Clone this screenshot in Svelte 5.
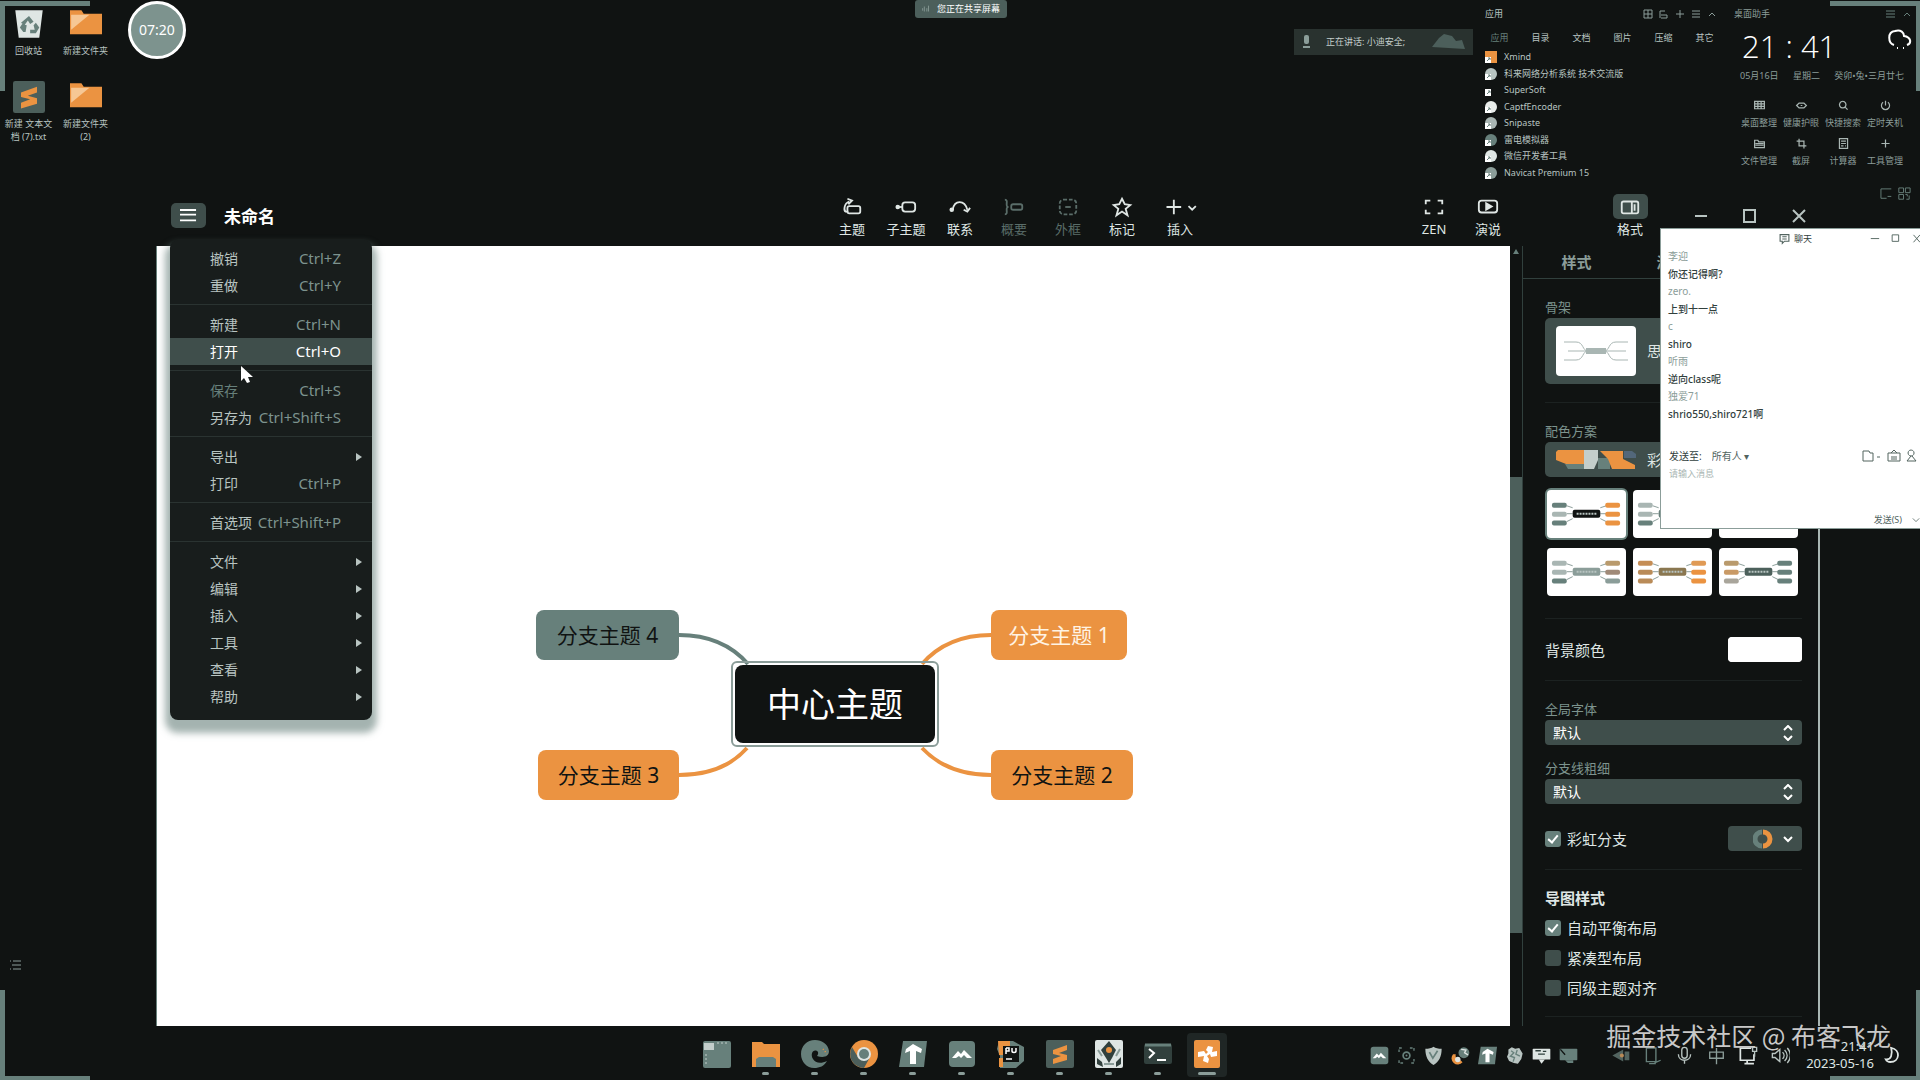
<script>
  const desktopIcons = [
    { icon: "bin", label: "回收站" },
    { icon: "folder", label: "新建文件夹" },
    { icon: "sublime", label: "新建 文本文档 (7).txt" },
    { icon: "folder", label: "新建文件夹 (2)" },
  ]

  const tools = [
    { icon: "topic", label: "主题" },
    { icon: "subtopic", label: "子主题" },
    { icon: "relation", label: "联系" },
    { icon: "summary", label: "概要", disabled: true },
    { icon: "boundary", label: "外框", disabled: true },
    { icon: "star", label: "标记" },
    { icon: "insert", label: "插入", wide: true },
  ]

  const menuGroups = [
    [
      { label: "撤销", keys: "Ctrl+Z" },
      { label: "重做", keys: "Ctrl+Y" },
    ],
    [
      { label: "新建", keys: "Ctrl+N" },
      { label: "打开", keys: "Ctrl+O", active: true },
    ],
    [
      { label: "保存", keys: "Ctrl+S", disabled: true },
      { label: "另存为", keys: "Ctrl+Shift+S" },
    ],
    [{ label: "导出" }, { label: "打印", keys: "Ctrl+P" }],
    [{ label: "首选项", keys: "Ctrl+Shift+P" }],
    [
      { label: "文件" },
      { label: "编辑" },
      { label: "插入" },
      { label: "工具" },
      { label: "查看" },
      { label: "帮助" },
    ],
  ]

  const nodes = [
    { label: "分支主题 4", x: 379, y: 364, w: 143, kind: "teal" },
    { label: "分支主题 3", x: 381, y: 504, w: 141, kind: "orange" },
    { label: "分支主题 1", x: 834, y: 364, w: 136, kind: "orange light" },
    { label: "分支主题 2", x: 834, y: 504, w: 142, kind: "orange" },
  ]

  const T = "#67807b"
  const O = "#eb9341"
  const themes = [
    { left: [T, "#a9b6b3", T], mid: "#101312", right: [O, O, O] },
    { left: ["#a9b6b3", "#a9b6b3", T], mid: T, right: [T, T, T] },
    { left: [T, T, T], mid: T, right: [T, T, T] },
    { left: ["#a9b6b3", "#a9b6b3", T], mid: "#8b9d99", right: ["#b99a6c", "#a08a78", "#8b9d99"] },
    { left: ["#c58d55", "#b98b58", "#b98b58"], mid: "#8a7750", right: ["#e09a55", O, O] },
    { left: ["#b99a6c", "#c99a66", "#a9a59b"], mid: "#4c605b", right: [T, T, T] },
  ]

  const apps = [
    { label: "Xmind", color: O },
    { label: "科来网络分析系统 技术交流版", color: "#b8c4c1" },
    { label: "SuperSoft", color: "#ffffff", small: true },
    { label: "CaptfEncoder", color: "#e8ecea" },
    { label: "Snipaste", color: "#a9b6b3" },
    { label: "雷电模拟器", color: "#67807b" },
    { label: "微信开发者工具", color: "#dfe6e4" },
    { label: "Navicat Premium 15", color: "#8b9d99" },
  ]
  const appTabs = ["应用", "目录", "文档", "图片", "压缩", "其它"]

  const helpers = [
    { label: "桌面整理", d: "M2 3h12v9H2zM2 6h12M2 9h12M6 3v9M10 3v9" },
    { label: "健康护眼", d: "M2 8l3-3h6l3 3-3 3H5zM7 8h2" },
    { label: "快捷搜索", d: "M7 3a4 4 0 1 0 .1 0M10 10l3 3" },
    { label: "定时关机", d: "M5 4a5 5 0 1 0 6 0M8 2v6" },
    { label: "文件管理", d: "M2 4h4l1 2h7v7H2zM3 8h10M3 10h10" },
    { label: "截屏", d: "M5 2v9h9M2 5h9v9" },
    { label: "计算器", d: "M3 2h10v12H3zM5 5h6M5 8h6M5 11h3M10 11h1" },
    { label: "工具管理", d: "M8 3v10M3 8h10" },
  ]

  const messages = [
    { name: "李迎", text: "你还记得啊?" },
    { name: "zero.", text: "上到十一点" },
    { name: "c", text: "shiro" },
    { name: "听雨", text: "逆向class呢" },
    { name: "独爱71", text: "shrio550,shiro721啊" },
  ]

  const dock = ["start", "files", "edge", "chrome", "typora", "tencent", "pycharm", "sublime", "photo", "terminal", "xmind"]
  const tray = ["tencent", "focus", "shield", "chat", "typora", "leaf", "screen", "monitor"]
  const system = ["speaker", "phone", "mic", "ime", "network", "volume"]

  let rainbow = true
  let balance = true
  let compact = false
  let align = false
</script>

{#snippet glyph(name)}
  <svg class="glyph" viewBox="0 0 28 28" aria-hidden="true">
    {#if name === "bin"}
      <path d="M2 2h24l-3 24H5z" fill="#dfe6e4" />
      <path d="M14 7l4 5-3 2-2-3-3 4-3-2zM8 14l4 1-1 6H9l-3-4zM20 13l3 4-3 5h-5v-3h4l-1-4z" fill={T} />
    {:else if name === "folder"}
      <path d="M0 2h10l2 3h16v18H0z" fill={O} />
      <path d="M1 6h16L1 19z" fill="#f6c794" />
    {:else if name === "sublime"}
      <rect width="28" height="28" rx="2" fill="#4c5f5b" />
      <path d="M7 10l14-5v5l-8 3 8 2v5L7 24v-5l8-3-8-2z" fill={O} />
    {:else if name === "start"}
      <rect y="1" width="28" height="27" rx="2" fill={T} />
      <path d="M1 3h10v7H1z" fill="#c3cecb" />
      <path d="M14 3h12" stroke="#c3cecb" stroke-dasharray="2 2" />
      <path d="M3 14v10" stroke="#c3cecb" stroke-dasharray="2 2" />
    {:else if name === "files"}
      <path d="M0 2h10l2 2h16v23H0z" fill={O} />
      <path d="M4 27v-8l3-2h14l3 2v8z" fill={T} />
    {:else if name === "edge"}
      <path d="M28 11C27 4 21 0 14 0 6 0 0 6 0 14s6 14 13 14c6 0 10-2 13-7-6 3-12 2-14-2-3-5 0-10 4-8 2 1 1 4 0 5 6 2 12 1 12-5z" fill={T} />
      <path d="M22 9l4 5" stroke={O} stroke-width="1.5" stroke-dasharray="1 2" />
    {:else if name === "chrome"}
      <circle cx="14" cy="14" r="14" fill={O} />
      <path d="M2 7a14 14 0 0 0 12 21l5-9H9z" fill="#4c5f5b" />
      <circle cx="14" cy="14" r="7" fill="#dfe6e4" />
      <circle cx="14" cy="14" r="5" fill={T} />
    {:else if name === "typora"}
      <path d="M4 1h24l-3 26H0z" fill={T} />
      <path d="M14 4l9 5-1 4-5-2v13h-6V11l-5 2 1-4z" fill="#fff" />
    {:else if name === "tencent"}
      <rect x="1" y="1" width="26" height="26" rx="4" fill={T} />
      <path d="M4 18l6-7 3 3 3-4 8 8h-5l-3-3-3 3-2-2-3 2z" fill="#fff" />
    {:else if name === "pycharm"}
      <path d="M2 1h14l11 6v14l-8 7H3V16L0 9z" fill={T} />
      <path d="M1 1h12v5H6v9H2zM2 18h4v9H2z" fill={O} />
      <rect x="6" y="6" width="16" height="16" fill="#101312" />
      <path d="M9 8v6M9 8h3v3H9M15 8v3c0 2 4 2 4 0V8M9 19h6" stroke="#fff" stroke-width="1.5" fill="none" />
    {:else if name === "photo"}
      <rect width="28" height="28" rx="2" fill="#dfe6e4" />
      <path d="M14 1l7 9-4 8-3 5-3-5-5-8zM2 18l5 4 1 5-6-3zM26 17l-5 5v5l5-3z" fill="#31403d" />
      <circle cx="14" cy="10" r="3" fill={O} />
      <path d="M3 10l4 6M25 9l-4 7M9 24h10" stroke="#8b9d99" stroke-width="2" />
    {:else if name === "terminal"}
      <rect y="4" width="28" height="20" rx="2" fill="#31403d" />
      <path d="M1 5h26" stroke={T} stroke-width="3" />
      <path d="M5 9l5 4-5 5M13 20h9" stroke="#fff" stroke-width="2" fill="none" />
    {:else if name === "xmind"}
      <rect x="1" width="26" height="28" rx="2" fill={O} />
      <path d="M15 6l5 1-1 5 5-1v5l-6 1-1-3-3 2 2 3-1 4-5-2 1-5-6 1v-5l6-1 2 3 2-2-2-2z" fill="#fff" />
    {:else if name === "focus"}
      <path d="M3 9V3h6M19 3h6v6M25 19v6h-6M9 25H3v-6" stroke={T} stroke-width="2" fill="none" stroke-dasharray="4 2" />
      <circle cx="14" cy="14" r="5" stroke={T} stroke-width="2.5" fill="none" />
      <circle cx="14" cy="14" r="1.5" fill={T} />
    {:else if name === "shield"}
      <path d="M2 4c5 0 9-1 12-3 3 2 7 3 12 3 0 12-4 19-12 24C6 23 2 16 2 4z" fill="#b8c4c1" />
      <path d="M8 9l5 9 7-11" stroke={T} stroke-width="2.5" fill="none" />
    {:else if name === "chat"}
      <path d="M3 12a9 9 0 0 0 14 12l-3-3c-5 0-8-4-7-9z" fill={O} />
      <circle cx="19" cy="10" r="8" fill={T} />
      <path d="M15 5l7 1-2 4 5 3" stroke="#dfe6e4" stroke-width="2" fill="none" />
      <circle cx="10" cy="20" r="4" fill="#dfe6e4" />
    {:else if name === "leaf"}
      <path d="M5 5l5-3 5 2 6-1 5 8-2 8-5 7-6-1-7-3-3-6 2-5z" fill="#b8c4c1" />
      <path d="M9 7l4 3-5 5 6 2-2 6M18 6l-2 6 6 3" stroke={T} stroke-width="2" fill="none" />
    {:else if name === "screen"}
      <rect x="1" y="4" width="26" height="16" rx="1" fill="#dfe6e4" />
      <path d="M10 20h9l-5 6z" fill="#dfe6e4" />
      <path d="M5 7h8M9 12h10M16 8h5" stroke="#31403d" stroke-width="2" />
    {:else if name === "monitor"}
      <rect x="1" y="4" width="26" height="17" rx="1" fill={T} />
      <path d="M9 21h12v4H13z" fill={T} />
      <path d="M2 5l7 8" stroke="#101312" stroke-width="2" />
    {:else if name === "speaker"}
      <path d="M2 14L18 5v18zM20 8h7v13h-7z" fill="#52645f" />
      <circle cx="16" cy="14" r="3" fill="#b98b58" />
    {:else if name === "phone"}
      <path d="M5 3h14v20H5zM17 25l9-4M9 26h10" stroke={T} stroke-width="2" fill="none" />
    {:else if name === "mic"}
      <path d="M14 2a4 4 0 0 1 4 4v8a4 4 0 0 1-8 0V6a4 4 0 0 1 4-4zM5 12c0 12 18 12 18 0M14 21v5" stroke="#b8c4c1" stroke-width="2" fill="none" />
    {:else if name === "ime"}
      <path d="M4 9h20v9H4zM14 3v24" stroke="#8b9d99" stroke-width="2" fill="none" />
    {:else if name === "network"}
      <path d="M18 3H2v18h20v-9M8 26h14M12 21v5" stroke="#dfe6e4" stroke-width="2.5" fill="none" />
      <path d="M20 2h6v6h-6zM23 8v8" stroke="#b8c4c1" stroke-width="2" fill="none" />
    {:else if name === "volume"}
      <path d="M2 11h4l7-6v18l-7-6H2zM17 9c3 3 3 7 0 10M20 6c5 5 5 11 0 16M24 3c6 7 6 15 0 22" stroke="#b8c4c1" stroke-width="2" fill="none" />
    {/if}
  </svg>
{/snippet}

{#snippet line(name)}
  <svg class="line" viewBox="0 0 24 24" aria-hidden="true">
    {#if name === "topic"}
      <rect x="7" y="11" width="14" height="8" rx="2" />
      <path d="M8 17H5c-2-1-2-9 4-11M7 3l5 2-4 4" />
    {:else if name === "subtopic"}
      <rect x="8" y="7" width="14" height="10" rx="3" />
      <path d="M3 12h5" />
      <circle cx="3" cy="12" r="1.5" fill="currentColor" />
    {:else if name === "relation"}
      <path d="M4 15C6 4 17 4 20 15M16 15l4 2 3-4" />
      <circle cx="3" cy="15" r="1.5" fill="currentColor" />
    {:else if name === "summary"}
      <path d="M2 4c3 0 2 3 2 5 0 3 1 3 2 3-1 0-2 0-2 3 0 2 1 5-2 5" />
      <rect x="9" y="9" width="12" height="6" rx="2" />
    {:else if name === "boundary"}
      <rect x="3" y="4" width="18" height="16" rx="4" stroke-dasharray="4 2" />
      <path d="M9 12h6" />
    {:else if name === "star"}
      <path d="M12 3l3 6 6 1-5 4 2 7-6-4-6 4 2-7-5-4 6-1z" />
    {:else if name === "zen"}
      <path d="M3 9V5h5M16 5h5v4M21 15v4h-5M8 19H3v-4" />
    {:else if name === "play"}
      <rect x="2" y="5" width="20" height="13" rx="3" />
      <path d="M10 8l6 3.500-6 3.500z" fill="currentColor" />
    {:else if name === "format"}
      <rect x="3" y="6" width="18" height="13" rx="2" />
      <path d="M14 6v13M17 9v7" />
    {/if}
  </svg>
{/snippet}

<div class="desktop">
  <i class="corner tl"></i>
  <i class="corner tr"></i>
  <i class="corner bl"></i>
  <i class="corner br"></i>

  <div class="desktop-icons">
    {#each desktopIcons as item}
      <button class="shortcut">
        <span class="shortcut-icon">{@render glyph(item.icon)}</span>
        <span>{item.label}</span>
      </button>
    {/each}
  </div>

  <div class="timer">07:20</div>

  <div class="sharing">
    <svg viewBox="0 0 12 12" aria-hidden="true"><path d="M2 5v3M4 3v6M7 5v4M9 2v7" /></svg>
    您正在共享屏幕
  </div>

  <div class="speaking">
    <svg viewBox="0 0 12 16" aria-hidden="true">
      <rect x="4" y="1" width="5" height="9" rx="2" />
      <path d="M3 12h7v2H3z" />
    </svg>
    <span>正在讲话: 小迪安全;</span>
    <svg class="wave" viewBox="0 0 34 20" aria-hidden="true">
      <path d="M1 15l7-9 5-4 8 2 4 5 6-1 3 9z" />
    </svg>
  </div>

  <section class="apps">
    <header>
      <b>应用</b>
      <svg viewBox="0 0 76 12" aria-hidden="true">
        <path d="M2 2h8v8H2zM2 6h8M6 2v8M18 10V3h5M19 7h6v3h-6M38 2v8M34 6h8M50 3h8M50 6h8M50 9h8M67 8l3-3 3 3" />
      </svg>
    </header>
    <nav>
      {#each appTabs as tab, i}
        <button class:dim={i === 0}>{tab}</button>
      {/each}
    </nav>
    <ul>
      {#each apps as app}
        <li>
          <svg viewBox="0 0 12 12" aria-hidden="true">
            {#if app.small}
              <rect x="0" y="5" width="6" height="6" fill={app.color} />
            {:else if app.label === "Xmind"}
              <rect width="12" height="12" fill={app.color} />
            {:else}
              <circle cx="6" cy="6" r="6" fill={app.color} />
            {/if}
            <path d="M0 6h6v6H0z" fill="#fff" />
            <path d="M2 10l3-3M3 7h2v2" stroke="#67807b" fill="none" />
          </svg>
          {app.label}
        </li>
      {/each}
    </ul>
  </section>

  <section class="helper">
    <header>
      <b>桌面助手</b>
      <svg viewBox="0 0 28 12" aria-hidden="true"><path d="M2 3h9M2 6h9M2 9h9M20 8l3-3 3 3" /></svg>
    </header>
    <div class="clock">
      <time>21 : 41</time>
      <svg viewBox="0 0 24 24" aria-hidden="true">
        <path d="M6 17C0 15-1 4 7 3c6-2 9 2 9 5 7 1 8 7 3 9M9 20h1M15 20h1" />
      </svg>
    </div>
    <div class="date"><span>05月16日</span><span>星期二</span><span>癸卯•兔•三月廿七</span></div>
    <div class="helper-grid">
      {#each helpers as item}
        <button>
          <svg viewBox="0 0 16 16" aria-hidden="true"><path d={item.d} /></svg>
          {item.label}
        </button>
      {/each}
    </div>
    <svg class="corner-icons" viewBox="0 0 34 14" aria-hidden="true">
      <path d="M1 2h11M1 2v10h6M8 10h4M20 1h5v5h-5zM27 1h5v5h-5zM20 8h5v5h-5zM27 8h2v2M31 9v4h-3" />
    </svg>
  </section>

  <svg class="list-icon" viewBox="0 0 12 12" aria-hidden="true"><path d="M1 2h1M4 2h8M3 6h9M1 10h1M4 10h8" /></svg>

  <main class="xmind">
    <header class="titlebar">
      <button class="burger" aria-label="菜单">
        <svg viewBox="0 0 18 13" aria-hidden="true"><path d="M0 1h17M0 6h17M0 12h17" /></svg>
      </button>
      <h1>未命名</h1>
      <div class="tools">
        {#each tools as tool}
          <button class="tool" class:wide={tool.wide} class:disabled={tool.disabled}>
            <span class="tool-icon">
              {#if tool.icon === "insert"}
                <svg class="line long" viewBox="0 0 40 24" aria-hidden="true"><path d="M10 4v16M2 12h16M26 11l4 4 4-4" /></svg>
              {:else}
                {@render line(tool.icon)}
              {/if}
            </span>
            {tool.label}
          </button>
        {/each}
      </div>
      <div class="tools present">
        <button class="tool"><span class="tool-icon">{@render line("zen")}</span>ZEN</button>
        <button class="tool"><span class="tool-icon">{@render line("play")}</span>演说</button>
      </div>
      <button class="tool format"><span class="tool-icon pressed">{@render line("format")}</span>格式</button>
      <div class="controls">
        <button aria-label="最小化"><svg viewBox="0 0 14 14" aria-hidden="true"><path d="M1 7h12" /></svg></button>
        <button aria-label="最大化"><svg viewBox="0 0 14 14" aria-hidden="true"><path d="M1 1h11v12H1z" /></svg></button>
        <button aria-label="关闭"><svg viewBox="0 0 14 14" aria-hidden="true"><path d="M1 1l12 12M13 1L1 13" /></svg></button>
      </div>
    </header>

    <div class="workspace">
      <div class="canvas">
        <svg class="branches" viewBox="0 0 1353 780" aria-hidden="true">
          <path d="M522 389C555 389 577 402 591 418" stroke={T} />
          <path d="M522 529C552 529 574 520 590 502" stroke={O} />
          <path d="M834 389C801 389 779 402 765 418" stroke={O} />
          <path d="M834 529C804 529 782 520 765 502" stroke={O} />
        </svg>
        {#each nodes as node}
          <div class={`node ${node.kind}`} style={`left: ${node.x}px; top: ${node.y}px; width: ${node.w}px`}>
            {node.label}
          </div>
        {/each}
        <div class="root"><span>中心主题</span></div>
      </div>

      <div class="scrollbar"><i></i></div>

      <aside class="panel">
        <nav class="tabs">
          <button>样式</button>
          <button>演说</button>
        </nav>
        <section>
          <h3>骨架</h3>
          <button class="picker skeleton">
            <svg viewBox="0 0 80 50" aria-hidden="true">
              <path d="M8 16h12c8 0 6 9 12 9M12 25h20M8 34h12c8 0 6-9 12-9M72 16H60c-8 0-6 9-12 9M70 25H48M72 34H60c-8 0-6-9-12-9" />
              <path class="hub" d="M30 25h20" />
            </svg>
            思维导图
          </button>
        </section>
        <section>
          <h3>配色方案</h3>
          <button class="picker palette">
            <svg viewBox="0 0 80 20" aria-hidden="true">
              <path d="M2 0h26v14H10L0 10V2z" fill="#eb9341" />
              <path d="M9 14h19v5H12z" fill="#67807b" />
              <path d="M28 0h14v10l-4 9H28z" fill="#c3cecb" />
              <path d="M42 8h12v11H42z" fill="#67807b" />
              <path d="M44 1h23v8l12 6v4H56l-4-10z" fill="#eb9341" />
              <path d="M68 1h8l4 3v4H68z" fill="#52677a" />
            </svg>
            彩虹
          </button>
          <div class="themes">
            {#each themes as theme, i}
              <button class="theme" class:selected={i === 0} aria-label={`配色 ${i + 1}`}>
                <svg viewBox="0 0 80 50" aria-hidden="true">
                  <path class="wire" d="M20 17l6 2M20 25h6M20 33l6-3M60 17l-6 2M60 25h-6M60 33l-6-3" />
                  {#each theme.left as color, row}
                    <rect x="5" y={14 + row * 9} width="15" height="5" rx="2" fill={color} />
                  {/each}
                  {#each theme.right as color, row}
                    <rect x="59" y={14 + row * 9} width="15" height="5" rx="2" fill={color} />
                  {/each}
                  <rect x="26" y="21" width="28" height="8" rx="2" fill={theme.mid} />
                  <path d="M30 25h20" stroke="#b8c4c1" stroke-width="2" stroke-dasharray="2 1" />
                </svg>
              </button>
            {/each}
          </div>
        </section>
        <section class="row">
          <label for="background">背景颜色</label>
          <input id="background" type="color" value="#ffffff" />
        </section>
        <section>
          <label class="caption" for="font">全局字体</label>
          <div class="select">
            <select id="font"><option>默认</option></select>
            <svg viewBox="0 0 10 16" aria-hidden="true"><path d="M1 5l4-4 4 4M1 11l4 4 4-4" /></svg>
          </div>
          <label class="caption second" for="thickness">分支线粗细</label>
          <div class="select">
            <select id="thickness"><option>默认</option></select>
            <svg viewBox="0 0 10 16" aria-hidden="true"><path d="M1 5l4-4 4 4M1 11l4 4 4-4" /></svg>
          </div>
          <div class="row rainbow">
            <label class="check"><input type="checkbox" bind:checked={rainbow} />彩虹分支</label>
            <button class="ring" aria-label="彩虹配色">
              <svg viewBox="0 0 42 20" aria-hidden="true">
                <path d="M9 3a7 7 0 0 0 0 14" stroke="#67807b" stroke-width="5" />
                <path d="M10 3a7 7 0 0 1 0 14" stroke="#eb9341" stroke-width="5" />
                <path d="M31 8l4 4 4-4" stroke="#fff" stroke-width="2" />
              </svg>
            </button>
          </div>
        </section>
        <section class="checks">
          <h2>导图样式</h2>
          <label class="check"><input type="checkbox" bind:checked={balance} />自动平衡布局</label>
          <label class="check"><input type="checkbox" bind:checked={compact} />紧凑型布局</label>
          <label class="check"><input type="checkbox" bind:checked={align} />同级主题对齐</label>
        </section>
      </aside>
    </div>

    <div class="menu">
      {#each menuGroups as group}
        <div class="group">
          {#each group as item}
            <button class="entry" class:active={item.active} class:disabled={item.disabled}>
              <span>{item.label}</span>
              {#if item.keys}
                <kbd>{item.keys}</kbd>
              {:else}
                <i class="arrow"></i>
              {/if}
            </button>
          {/each}
        </div>
      {/each}
    </div>
  </main>

  <svg class="cursor" viewBox="0 0 12 18" aria-hidden="true"><path d="M0 0v15l3-3 3 5 3-1-2-5h5z" /></svg>

  <section class="chat">
    <header>
      <span></span>
      <b><svg viewBox="0 0 10 10" aria-hidden="true"><path d="M1 1h8v6H5L3 9V7H1zM3 3h4M3 5h4" /></svg>聊天</b>
      <svg class="chat-controls" viewBox="0 0 56 12" aria-hidden="true">
        <path d="M3 6h9M26 2h7v7h-7zM49 2l7 8M56 2l-7 8" />
      </svg>
    </header>
    <dl>
      {#each messages as message}
        <dt>{message.name}</dt>
        <dd>{message.text}</dd>
      {/each}
    </dl>
    <div class="send-to">
      <label for="receiver">发送至:</label>
      <select id="receiver"><option>所有人 ▾</option></select>
      <svg viewBox="0 0 60 14" aria-hidden="true">
        <path d="M3 2h6l1 2h3v8H3zM17 8h3M28 4h12v8H28zM31 4l3-3 3 3M31 8h6M31 10h6M51 1a3 3 0 1 0 .1 0M51 7l-4 5h9l-4-5" />
      </svg>
    </div>
    <textarea aria-label="消息" placeholder="请输入消息"></textarea>
    <footer>
      <button>发送(S)</button>
      <svg viewBox="0 0 10 10" aria-hidden="true"><path d="M1 3l4 4 4-4" /></svg>
    </footer>
  </section>

  <footer class="taskbar">
    <span></span>
    <div class="dock">
      {#each dock as app, i}
        <button class:running={i > 0} class:current={app === "xmind"} aria-label={app}>{@render glyph(app)}</button>
      {/each}
    </div>
    <div class="status">
      <div class="tray">{#each tray as icon}{@render glyph(icon)}{/each}</div>
      <div class="system">{#each system as icon}{@render glyph(icon)}{/each}</div>
      <div class="now"><time>21:41</time><time>2023-05-16</time></div>
      <svg class="moon" viewBox="0 0 18 20" aria-hidden="true"><path d="M8 2c11 2 10 16-1 16-2 0-4-1-5-3 6 1 8-6 6-13z" /></svg>
    </div>
  </footer>

  <div class="watermark">掘金技术社区 @ 布客飞龙</div>
</div>

<style>
  :global(body) {
    background: #101312;
  }
  .desktop {
    position: relative;
    min-height: 100vh;
    overflow: hidden;
    background: #101312;
    color: #b8c4c1;
    font-family: "Noto Sans", "Noto Sans CJK SC", sans-serif;
    font-size: 9px;
    line-height: 12px;
  }
  button,
  select,
  input,
  textarea,
  kbd {
    margin: 0;
    padding: 0;
    border: none;
    outline: none;
    background: none;
    color: inherit;
    font: inherit;
  }
  h1,
  h2,
  h3,
  dl,
  dd,
  ul {
    margin: 0;
    padding: 0;
  }
  b {
    font-weight: 400;
  }
  svg {
    display: block;
    flex: none;
    fill: none;
  }

  .corner {
    position: absolute;
    box-sizing: border-box;
    width: 90px;
    height: 90px;
    border: 0 solid #67807b;
  }
  .tl {
    top: 1px;
    left: 0;
    border-width: 5px 0 0 5px;
  }
  .tr {
    top: 1px;
    right: 0;
    border-width: 5px 4px 0 0;
  }
  .bl {
    bottom: 0;
    left: 0;
    border-width: 0 0 4px 5px;
  }
  .br {
    bottom: 0;
    right: 0;
    border-width: 0 4px 4px 0;
  }

  .desktop-icons {
    position: absolute;
    top: 8px;
    left: 0;
    display: grid;
    grid-template-columns: 57px 57px;
    grid-auto-rows: 73px;
  }
  .shortcut {
    display: flex;
    flex-direction: column;
    align-items: center;
    gap: 4px;
    padding: 0 3px;
    line-height: 13px;
  }
  .shortcut-icon {
    width: 32px;
    height: 32px;
  }
  .glyph {
    width: 100%;
    height: 100%;
  }
  .timer {
    position: absolute;
    top: 1px;
    left: 128px;
    box-sizing: border-box;
    width: 58px;
    height: 58px;
    border: 3px solid #fff;
    border-radius: 50%;
    background: #7d938e;
    color: #fff;
    font-size: 14px;
    line-height: 52px;
    text-align: center;
  }
  .sharing {
    position: absolute;
    top: 0;
    left: 50%;
    display: flex;
    align-items: center;
    gap: 6px;
    height: 18px;
    margin-left: -45px;
    padding: 0 7px 0 6px;
    border-radius: 3px;
    background: #4c5f5b;
    color: #fff;
  }
  .sharing svg {
    width: 10px;
    stroke: #8b9d99;
  }
  .speaking {
    position: absolute;
    top: 29px;
    right: 447px;
    box-sizing: border-box;
    display: flex;
    align-items: center;
    gap: 14px;
    width: 179px;
    height: 26px;
    padding: 0 8px 0 6px;
    background: #29322f;
    color: #c3cecb;
  }
  .speaking svg {
    width: 12px;
    fill: #8b9d99;
  }
  .speaking .wave {
    width: 34px;
    margin-left: auto;
    fill: #4c5f5b;
  }

  .apps {
    position: absolute;
    top: 8px;
    right: 202px;
    width: 233px;
  }
  .apps header,
  .helper header {
    display: flex;
    justify-content: space-between;
  }
  .apps header svg {
    width: 76px;
    stroke: #8b9d99;
  }
  .apps nav {
    display: flex;
    gap: 2px;
    margin-top: 12px;
  }
  .apps nav button {
    flex: none;
    width: 39px;
    padding-right: 10px;
  }
  .apps nav .dim {
    color: #67807b;
  }
  .apps ul {
    display: flex;
    flex-direction: column;
    justify-content: space-between;
    height: 128px;
    margin-top: 7px;
    list-style: none;
  }
  .apps li {
    display: flex;
    align-items: center;
    gap: 7px;
  }
  .apps li svg {
    width: 12px;
  }

  .helper {
    position: absolute;
    top: 8px;
    right: 8px;
    width: 178px;
    color: #8b9d99;
  }
  .helper header svg {
    width: 28px;
    stroke: #67807b;
  }
  .clock {
    display: flex;
    justify-content: space-between;
    height: 41px;
    margin-top: 6px;
    padding-left: 8px;
    color: #fff;
    font-family: "Open Sans", sans-serif;
    font-size: 31px;
    font-weight: 300;
    line-height: 41px;
  }
  .clock svg {
    width: 24px;
    height: 24px;
    margin-top: 2px;
    stroke: #fff;
    stroke-width: 2;
  }
  .date {
    display: flex;
    justify-content: space-between;
    margin-top: 3px;
    padding: 0 8px 0 6px;
  }
  .helper-grid {
    display: grid;
    grid-template-columns: repeat(4, 42px);
    row-gap: 8px;
    margin-top: 17px;
    padding-left: 4px;
  }
  .helper-grid button {
    display: flex;
    flex-direction: column;
    align-items: center;
    gap: 5px;
  }
  .helper-grid svg {
    width: 13px;
    height: 13px;
    stroke: #a9b6b3;
    stroke-width: 1.500;
  }
  .corner-icons {
    width: 32px;
    margin: 20px 0 0 auto;
    stroke: #67807b;
  }
  .list-icon {
    position: absolute;
    top: 959px;
    left: 9px;
    width: 12px;
    stroke: #8b9d99;
  }

  .xmind {
    position: absolute;
    top: 194px;
    right: 100px;
    bottom: 54px;
    left: 156px;
    display: flex;
    flex-direction: column;
    background: #101312;
  }
  .titlebar {
    display: flex;
    align-items: flex-start;
    height: 52px;
  }
  .burger {
    display: grid;
    place-items: center;
    width: 35px;
    height: 25px;
    margin: 9px 18px 0 15px;
    border-radius: 5px;
    background: #3f4e4b;
  }
  .burger svg {
    width: 17px;
    stroke: #fff;
    stroke-width: 2;
  }
  h1 {
    flex: 1;
    padding-top: 10px;
    color: #fff;
    font-size: 17px;
    font-weight: 700;
    line-height: 26px;
  }
  .tools {
    display: flex;
  }
  .present {
    margin: 0 88px 0 196px;
  }
  .tool {
    display: flex;
    flex-direction: column;
    align-items: center;
    width: 54px;
    color: #dfe6e4;
    font-size: 13px;
    line-height: 20px;
  }
  .tool.wide {
    width: 62px;
  }
  .tool.disabled {
    color: #5a6d69;
  }
  .tool-icon {
    display: grid;
    place-items: center;
    width: 35px;
    height: 25px;
    border-radius: 5px;
  }
  .pressed {
    background: #3f4e4b;
  }
  .line {
    width: 22px;
    height: 22px;
    stroke: currentColor;
    stroke-width: 2;
  }
  .long {
    width: 40px;
  }
  .format {
    margin-right: 23px;
  }
  .controls {
    display: flex;
    gap: 7px;
    padding-top: 15px;
  }
  .controls button {
    display: grid;
    place-items: center;
    width: 42px;
  }
  .controls svg {
    width: 14px;
    stroke: #b8c4c1;
    stroke-width: 2;
  }

  .workspace {
    flex: 1;
    display: flex;
  }
  .canvas {
    position: relative;
    flex: 1;
    overflow: hidden;
    border-left: 1px solid #67807b;
    background: #fff;
  }
  .branches {
    position: absolute;
    top: 0;
    left: 0;
    width: 1353px;
    height: 780px;
    stroke-width: 4;
  }
  .node {
    position: absolute;
    border-radius: 8px;
    color: #101312;
    font-size: 21px;
    line-height: 50px;
    text-align: center;
  }
  .teal {
    background: #67807b;
  }
  .orange {
    background: #eb9341;
  }
  .light {
    color: #fff3e4;
  }
  .root {
    position: absolute;
    top: 415px;
    left: 574px;
    box-sizing: border-box;
    width: 208px;
    height: 86px;
    padding: 2px;
    border: 2px solid #8b9d99;
    border-radius: 6px;
  }
  .root span {
    display: block;
    border-radius: 8px;
    background: #101312;
    color: #fff;
    font-size: 34px;
    line-height: 78px;
    text-align: center;
  }
  .scrollbar {
    width: 12px;
    border-right: 1px solid #31403d;
  }
  .scrollbar i {
    display: block;
    height: 456px;
    margin-top: 231px;
    background: #4c5f5b;
  }
  .scrollbar::before {
    position: absolute;
    margin: 3px;
    border: 3px solid transparent;
    border-top-width: 0;
    border-bottom: 5px solid #67807b;
    content: "";
  }

  .panel {
    width: 295px;
    border-right: 2px solid #a9b6b3;
    color: #dfe6e4;
    font-size: 15px;
    line-height: 20px;
  }
  .tabs {
    display: flex;
    height: 32px;
    padding-left: 6px;
    border-bottom: 1px solid #31403d;
    color: #8b9d99;
    font-weight: 700;
  }
  .tabs button {
    width: 95px;
  }
  .panel section {
    margin: 0 16px 0 22px;
    padding: 18px 0;
    border-bottom: 1px solid #1c2221;
  }
  h3,
  .caption {
    display: block;
    margin-bottom: 1px;
    color: #7d938e;
    font-size: 13px;
    font-weight: 400;
  }
  .second {
    margin-top: 13px;
  }
  h2 {
    font-size: 15px;
    font-weight: 700;
  }
  .picker {
    display: flex;
    align-items: center;
    gap: 11px;
    width: 100%;
    padding-left: 11px;
    border-radius: 5px;
    background: #3f4e4b;
  }
  .skeleton {
    height: 66px;
  }
  .skeleton svg {
    width: 80px;
    border-radius: 4px;
    background: #fff;
    stroke: #a9b6b3;
  }
  .skeleton .hub {
    stroke-width: 6;
  }
  .palette {
    height: 35px;
  }
  .palette svg {
    width: 80px;
  }
  .themes {
    display: grid;
    grid-template-columns: repeat(3, 1fr);
    gap: 10px 7px;
    margin: 13px 0 4px;
    padding: 0 4px 0 2px;
  }
  .theme {
    display: grid;
    place-items: center;
    height: 48px;
    border-radius: 4px;
    background: #fff;
  }
  .theme svg {
    width: 79px;
  }
  .wire {
    stroke: #8b9d99;
  }
  .selected {
    box-shadow: 0 0 0 2px #67807b;
  }
  .row {
    display: flex;
    align-items: center;
    justify-content: space-between;
  }
  input[type="color"] {
    width: 74px;
    height: 25px;
    border-radius: 4px;
    background: #fff;
    appearance: none;
  }
  input[type="color"]::-webkit-color-swatch-wrapper {
    padding: 0;
  }
  input[type="color"]::-webkit-color-swatch {
    border: none;
    border-radius: 4px;
  }
  .select {
    display: flex;
    align-items: center;
    padding-right: 9px;
    border-radius: 4px;
    background: #3f4e4b;
  }
  .select select {
    flex: 1;
    height: 25px;
    padding-left: 8px;
    color: #fff;
    font-size: 14px;
    appearance: none;
  }
  .select svg {
    width: 10px;
    stroke: #fff;
    stroke-width: 2;
  }
  .rainbow {
    margin-top: 22px;
  }
  .check {
    display: flex;
    align-items: center;
    gap: 6px;
  }
  .check input {
    display: grid;
    place-items: center;
    width: 16px;
    height: 16px;
    border-radius: 3px;
    background: #3f4e4b;
    appearance: none;
  }
  .check input:checked {
    background: #67807b;
  }
  .check input:checked::before {
    width: 4px;
    height: 8px;
    margin-top: -2px;
    border: solid #fff;
    border-width: 0 2px 2px 0;
    transform: rotate(40deg);
    content: "";
  }
  .ring {
    display: grid;
    place-items: center end;
    width: 74px;
    height: 25px;
    padding-right: 7px;
    border-radius: 4px;
    background: #3f4e4b;
  }
  .ring svg {
    width: 42px;
  }
  .checks {
    display: flex;
    flex-direction: column;
    gap: 10px;
  }

  .menu {
    position: absolute;
    top: 46px;
    left: 14px;
    width: 202px;
    padding: 5px 0 10px;
    border-radius: 8px;
    background: #181d1c;
    box-shadow: 0 8px 7px 5px rgba(103, 128, 123, 0.6);
    color: #b8c4c1;
    font-size: 14px;
    line-height: 27px;
    box-sizing: border-box;
  }
  .group + .group {
    margin-top: 5px;
    padding-top: 6px;
    border-top: 1px solid #2a3331;
  }
  .entry {
    display: flex;
    align-items: center;
    justify-content: space-between;
    width: 100%;
    height: 27px;
    padding: 0 31px 0 40px;
  }
  .entry kbd {
    color: #7d938e;
    font-size: 15px;
  }
  .entry.active {
    background: #3f4e4b;
  }
  .entry.active,
  .entry.active kbd {
    color: #fff;
  }
  .entry.disabled {
    color: #67807b;
  }
  .arrow {
    margin-right: -21px;
    border: 4px solid transparent;
    border-right-width: 0;
    border-left: 6px solid #b8c4c1;
  }
  .cursor {
    position: absolute;
    top: 366px;
    left: 241px;
    width: 12px;
    fill: #fff;
  }

  .chat {
    position: absolute;
    top: 228px;
    right: 0;
    box-sizing: border-box;
    width: 260px;
    height: 301px;
    display: flex;
    flex-direction: column;
    border: 1px solid #8b9d99;
    border-right: none;
    background: #fff;
    color: #52645f;
  }
  .chat svg {
    stroke: #52645f;
  }
  .chat header {
    display: grid;
    grid-template-columns: 1fr auto 1fr;
    align-items: center;
    height: 20px;
    padding-left: 10px;
  }
  .chat header b {
    display: flex;
    gap: 4px;
    color: #31403d;
  }
  .chat header b svg {
    width: 11px;
  }
  .chat-controls {
    width: 52px;
    margin-left: auto;
  }
  .chat dl {
    display: flex;
    flex-direction: column;
    padding: 0 7px;
    color: #31403d;
    font-size: 10px;
    line-height: 15px;
  }
  .chat dt {
    color: #8b9d99;
  }
  .chat dd {
    line-height: 20px;
    font-weight: 500;
  }
  .send-to {
    display: flex;
    align-items: center;
    gap: 10px;
    margin-top: auto;
    padding-left: 8px;
    font-size: 10px;
    line-height: 14px;
  }
  .send-to select {
    appearance: none;
  }
  .send-to svg {
    width: 60px;
    margin-left: auto;
  }
  .send-to label {
    color: #31403d;
  }
  .chat textarea {
    height: 44px;
    margin: 5px 8px 0;
    color: #31403d;
    resize: none;
  }
  .chat textarea::placeholder {
    color: #a9b6b3;
  }
  .chat footer {
    display: flex;
    justify-content: flex-end;
    align-items: center;
    gap: 10px;
    height: 16px;
  }
  .chat footer svg {
    width: 8px;
  }

  .taskbar {
    position: absolute;
    right: 0;
    bottom: 0;
    left: 0;
    display: grid;
    grid-template-columns: 1fr auto 1fr;
    align-items: center;
    height: 50px;
  }
  .dock {
    display: flex;
    gap: 9px;
    padding-left: 3px;
  }
  .dock button {
    display: flex;
    flex-direction: column;
    align-items: center;
    gap: 4px;
    box-sizing: border-box;
    width: 40px;
    height: 44px;
    padding-top: 7px;
    border-radius: 4px;
  }
  .dock .glyph {
    width: 28px;
    height: 28px;
  }
  .running::after {
    width: 7px;
    height: 3px;
    border-radius: 2px;
    background: #8b9d99;
    content: "";
  }
  .current {
    background: #1f2625;
  }
  .current::after {
    width: 18px;
  }
  .status {
    display: flex;
    align-items: center;
    justify-content: flex-end;
    padding-right: 20px;
  }
  .tray,
  .system {
    display: flex;
    gap: 8px;
    margin-right: 33px;
  }
  .system {
    gap: 13px;
    margin-right: 16px;
  }
  .status .glyph {
    width: 19px;
    height: 19px;
  }
  .now {
    display: flex;
    flex-direction: column;
    align-items: flex-end;
    color: #dfe6e4;
    font-size: 13px;
    line-height: 17px;
  }
  .moon {
    width: 16px;
    margin-left: 10px;
    stroke: #dfe6e4;
    stroke-width: 2;
  }
  .watermark {
    position: absolute;
    right: 29px;
    bottom: 27px;
    color: #c8c8c8;
    font-family: "Noto Sans CJK SC", sans-serif;
    font-size: 25px;
    line-height: 36px;
  }
</style>
